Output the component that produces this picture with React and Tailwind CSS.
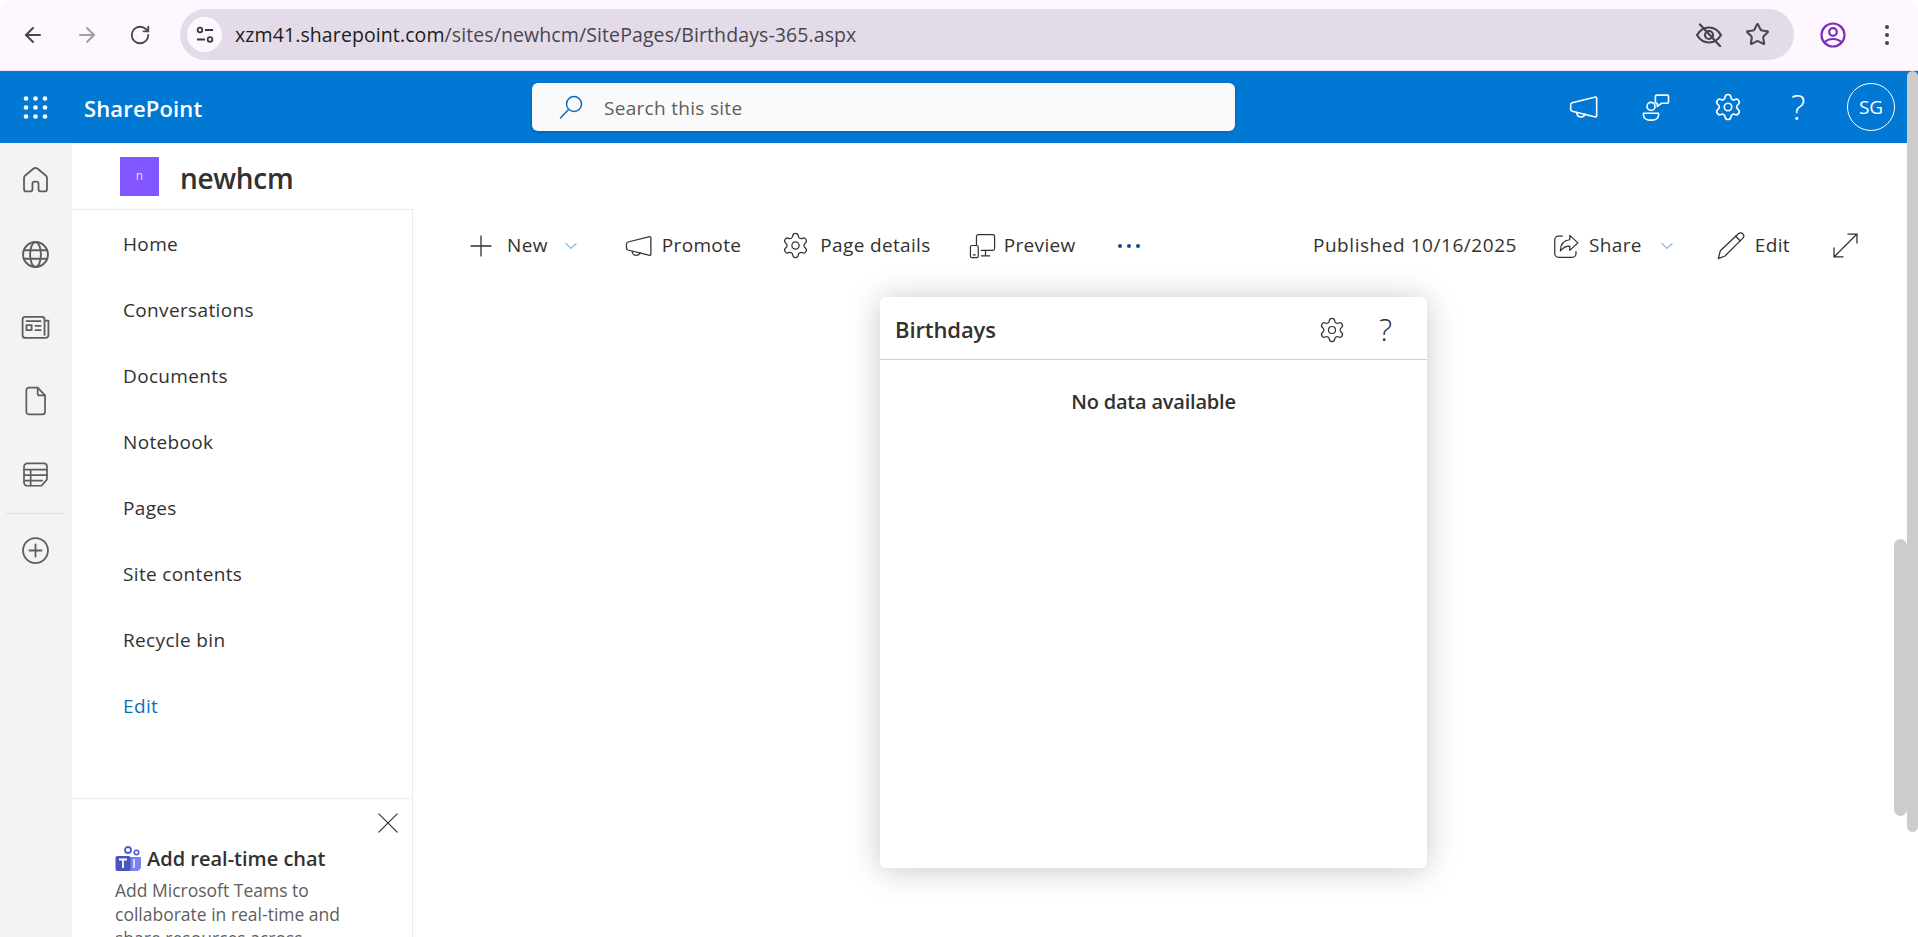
import React from "react";
import { ArrowLeft, ArrowRight, RotateCw, Star, Settings, ChevronDown } from "lucide-react";

const S = ({ size = 24, sw = 1.5, color = "currentColor", children, className = "" }) => (
  <svg width={size} height={size} viewBox="0 0 24 24" fill="none" stroke={color} strokeWidth={sw} strokeLinecap="round" strokeLinejoin="round" className={"shrink-0 " + className}>
    {children}
  </svg>
);

const Megaphone = (p) => (
  <S {...p}>
    <path d="M3.2 8.800 20.600 4.500c.5-.1.9.3.9.8v13.400c0 .5-.4.9-.9.8L3.200 15.200c-.7-.2-1.200-.8-1.200-1.500v-3.400c0-.7.5-1.300 1.200-1.500Z" />
    <path d="M6.500 16.200c.2 2 1.600 3.300 3.300 3.300 1.500 0 2.700-.9 3.100-2.200" />
  </S>
);
const Feedback = (p) => (
  <S {...p}>
    <circle cx="8" cy="11.500" r="3.200" />
    <path d="M2 17h12v1.500c0 2.300-2.500 4-6 4s-6-1.700-6-4V17Z" />
    <path d="M11.500 3.500c0-.6.4-1 1-1H21c.6 0 1 .4 1 1V8c0 .6-.4 1-1 1h-4.500L13 11.500V9h-.5c-.6 0-1-.4-1-1V3.500Z" />
  </S>
);
const Preview = (p) => (
  <S {...p}>
    <path d="M7 12V4.500C7 3.700 7.700 3 8.500 3h12c.8 0 1.500.7 1.500 1.500v10c0 .8-.7 1.500-1.500 1.500H11" />
    <path d="M14.500 16v4M11 20.500h7" />
    <rect x="2" y="12" width="6.500" height="10" rx="1.300" />
    <path d="M4.500 19.800h1.500" />
  </S>
);
const Share = (p) => (
  <S {...p}>
    <path d="M9 4H6a3 3 0 0 0-3 3v11a3 3 0 0 0 3 3h11a3 3 0 0 0 3-3v-1.500" />
    <path d="M15 3.500 21.500 9.500 15 15.500V12c-3.500 0-5.500 1-7.500 4 0-5 2.500-8.500 7.500-9V3.500Z" />
  </S>
);
const Pencil = (p) => (
  <S {...p}>
    <path d="M2.500 21.500 4 15.500 17.500 2.800c1-.9 2.500-.9 3.400.1.900 1 .8 2.500-.2 3.400L7.500 19.500l-5 2Z" />
    <path d="M15.500 4.700 19 8.200" />
  </S>
);
const Expand = (p) => (
  <S {...p}>
    <path d="M14 2.500h7.500V10M21.500 2.500l-19 19M2.500 14v7.500H10" />
  </S>
);
const Cross = (p) => (
  <S {...p}>
    <path d="M2 2 22 22M22 2 2 22" />
  </S>
);
const PlusThin = (p) => (
  <S {...p}>
    <path d="M12 2v20M2 12h20" />
  </S>
);

const Home = (p) => (
  <S {...p}>
    <path d="M10.200 3.100a2.800 2.800 0 0 1 3.600 0l6.700 5.600c.6.500 1 1.300 1 2.100v9.200c0 1-.8 1.800-1.800 1.800h-3.400c-1 0-1.800-.8-1.800-1.800v-4.500c0-1-.8-1.800-1.800-1.800h-1.400c-1 0-1.800.8-1.800 1.800V20c0 1-.8 1.800-1.800 1.800H4.300c-1 0-1.800-.8-1.800-1.800v-9.200c0-.8.400-1.600 1-2.100l6.700-5.600Z" />
  </S>
);
const Globe = (p) => (
  <S {...p}>
    <circle cx="12" cy="12" r="10.300" />
    <ellipse cx="12" cy="12" rx="4.500" ry="10.300" />
    <path d="M2.500 8.500h19M2.500 15.500h19" />
  </S>
);
const News = (p) => (
  <S {...p}>
    <path d="M19 18.500V6.500c0-1.200-.9-2-2-2H4c-1.100 0-2 .8-2 2v12c0 1.300 1 2.300 2.300 2.300h15.500c1.300 0 2.200-1 2.200-2.200V7.500h-3" />
    <rect x="5" y="11" width="4" height="3.800" />
    <path d="M5 7.800h11M12 11.500h4M12 14.800h4" />
  </S>
);
const Doc = (p) => (
  <S {...p}>
    <path d="M5.500 4c0-1.100.9-2 2-2H14l5.500 5.800V20c0 1.100-.9 2-2 2h-10c-1.100 0-2-.9-2-2V4Z" />
    <path d="M14 2v4.300c0 .8.700 1.500 1.500 1.500h4" />
  </S>
);
const Lists = (p) => (
  <S {...p}>
    <path d="M2.500 8V5.500c0-1.500 1.200-2.700 2.700-2.700h13.600c1.500 0 2.700 1.200 2.700 2.700V16l-4.500 5.300H5.200c-1.500 0-2.700-1.200-2.700-2.700V8Z" />
    <path d="M2.500 8h19M2.500 12.500h19M2.500 17h15M8 8v13" />
  </S>
);
const PlusCircle = (p) => (
  <S {...p}>
    <circle cx="12" cy="12" r="10.300" />
    <path d="M12 7v10M7 12h10" />
  </S>
);

const Waffle = () => (
  <svg width="25" height="23" viewBox="0 0 25 23" fill="#fff" className="shrink-0">
    {[3, 12.5, 22].map((x) =>
      [2.5, 11.5, 20.5].map((y) => <circle key={x + "-" + y} cx={x} cy={y} r="2.300" />)
    )}
  </svg>
);

const SearchIcon = () => (
  <svg width="24" height="24" viewBox="0 0 24 24" fill="none" stroke="#0f6cbd" strokeWidth="1.500" strokeLinecap="round" className="shrink-0">
    <circle cx="15" cy="9" r="7.500" />
    <path d="M9.500 14.500 1.500 23" />
  </svg>
);

const Teams = () => (
  <svg width="27" height="27" viewBox="0 0 27 27" className="shrink-0">
    <circle cx="13" cy="4" r="3" fill="none" stroke="#5059c9" strokeWidth="1.800" />
    <circle cx="21.500" cy="6.500" r="2.200" fill="none" stroke="#5059c9" strokeWidth="1.600" />
    <path d="M12 11h14v9.500a4.500 4.500 0 0 1-4.500 4.500H14a4 4 0 0 1-2-1V11Z" fill="#7b83eb" />
    <rect x="0.500" y="10" width="15" height="15" rx="2" fill="#4b53bc" />
    <path d="M4 13.500h8M8 13.500V22" stroke="#fff" strokeWidth="1.800" fill="none" />
    <path d="M19 13v9" stroke="#fff" strokeWidth="1.400" />
  </svg>
);

const NAV = ["Home", "Conversations", "Documents", "Notebook", "Pages", "Site contents", "Recycle bin"];

function CmdBtn({ icon, label, chevron, className = "", gap = "ml-[13px]", chevGap = "ml-[13px]" }) {
  return (
    <div className={"flex items-center " + className}>
      {icon}
      <span className={gap + " whitespace-nowrap"}>{label}</span>
      {chevron && <ChevronDown size={20} strokeWidth={1} className={chevGap + " text-[#0f6cbd]"} />}
    </div>
  );
}

export default function App() {
  return (
    <div className="relative flex h-[937px] w-full flex-col overflow-hidden bg-white font-['Open_Sans',sans-serif] text-[#323130]">
      {/* Browser bar */}
      <div className="flex h-[71px] shrink-0 items-center rounded-t-[10px] border-b border-[#eee0ea] bg-[#fef7ff] pb-px text-[#4a4453]">
        <ArrowLeft size={24} strokeWidth={2} className="ml-[21px]" />
        <ArrowRight size={24} strokeWidth={2} className="ml-[30px] text-[#a29ca8]" />
        <RotateCw size={22} strokeWidth={2} className="ml-[30px]" />
        <div className="ml-[29px] flex h-[51px] w-[1614px] items-center rounded-full bg-[#e3dce8] pl-[7px] pr-[24px]">
          <div className="flex size-[35px] items-center justify-center rounded-full bg-[#fef7ff]">
            <svg width="20" height="20" viewBox="0 0 20 20" fill="none" stroke="#3b3640" strokeWidth="1.800">
              <circle cx="5" cy="5" r="2.300" />
              <path d="M10 5h8M2 14.500h8" />
              <circle cx="15" cy="14.500" r="2.300" />
            </svg>
          </div>
          <span className="ml-[13px] whitespace-nowrap text-[19.5px] leading-none tracking-[0.1px] text-[#1d1b20]">
            xzm41.sharepoint.com<span className="text-[#49454f]">/sites/newhcm/SitePages/Birthdays-365.aspx</span>
          </span>
          <div className="ml-auto flex items-center gap-[22px]">
            <svg width="28" height="24" viewBox="0 0 28 24" fill="none" stroke="#47434c" strokeWidth="2.200" strokeLinecap="round">
              <path d="M2 12c3-5 7-7.500 12-7.500S23 7 26 12c-3 5-7 7.500-12 7.500S5 17 2 12Z" />
              <circle cx="14" cy="12" r="4" />
              <path d="M5 1.500 25 23" />
            </svg>
            <Star size={25} strokeWidth={2} />
          </div>
        </div>
        <svg width="26" height="26" viewBox="0 0 26 26" fill="none" stroke="#7b2fb5" strokeWidth="2.200" className="ml-[26px]">
          <circle cx="13" cy="13" r="11.500" />
          <circle cx="13" cy="10" r="3.800" />
          <path d="M4.500 20.500c2-2.500 5-3.500 8.500-3.500s6.500 1 8.500 3.500" />
        </svg>
        <svg width="6" height="22" viewBox="0 0 6 22" fill="#47434c" className="ml-[38px]">
          <circle cx="3" cy="3" r="2" />
          <circle cx="3" cy="11" r="2" />
          <circle cx="3" cy="19" r="2" />
        </svg>
      </div>

      {/* SharePoint suite bar */}
      <div className="relative flex h-[72px] shrink-0 items-center bg-[#0078d4] pr-[23px] text-white">
        <div className="ml-[23px]"><Waffle /></div>
        <span className="ml-[36px] mt-[2px] w-[124px] text-[22px] font-semibold tracking-[0.15px]">SharePoint</span>
        <div className="ml-[324px] flex h-[48px] w-[703px] items-center rounded-[6px] bg-[#fafafa] pl-[27px] shadow-[0_1px_3px_rgba(0,0,0,0.2)]">
          <SearchIcon />
          <span className="ml-[21px] mt-[2px] text-[19px] tracking-[0.3px] text-[#605e5c]">Search this site</span>
        </div>
        <div className="ml-auto flex items-center">
          <Megaphone size={32} sw={1.200} />
          <div className="ml-[41px]"><Feedback size={30} sw={1.300} /></div>
          <div className="ml-[42px]"><Settings size={30} strokeWidth={1.300} /></div>
          <span className="ml-[48px] w-[16px] text-[34px] font-light leading-none">?</span>
          <div className="ml-[40px] flex size-[48px] items-center justify-center rounded-full border border-white text-[19px]">SG</div>
        </div>
      </div>

      {/* Body */}
      <div className="flex min-h-0 flex-1">
        <div className="flex w-[72px] shrink-0 flex-col items-center bg-[#f3f3f3] pr-[2px] pt-[22px] text-[#605e5c]">
          <Home size={29} sw={1.500} />
          <div className="mt-[46px] flex"><Globe size={29} sw={1.600} /></div>
          <div className="mt-[42px] flex"><News size={31} sw={1.400} /></div>
          <div className="mt-[43px] flex"><Doc size={32} sw={1.300} /></div>
          <div className="mt-[43px] flex"><Lists size={29} sw={1.400} /></div>
          <div className="mt-[24px] h-px w-[59px] bg-[#e1dfdd]" />
          <div className="mt-[22px] flex"><PlusCircle size={29} sw={1.500} /></div>
        </div>

        <div className="flex min-w-0 flex-1 flex-col">
          <div className="flex h-[66px] shrink-0 items-center pl-[48px]">
            <div className="flex size-[39px] items-center justify-center bg-[#8155ff] text-[12px] text-[#e6dcff]">n</div>
            <span className="ml-[21px] mt-[3px] text-[28px] font-semibold leading-none tracking-[-0.3px]">newhcm</span>
          </div>

          <div className="flex min-h-0 flex-1">
            <div className="flex w-[341px] shrink-0 flex-col border-r border-t border-[#ececec]">
              <div className="flex h-[588px] shrink-0 flex-col pl-[51px] pt-[1px] text-[19px] tracking-[0.35px]">
                {NAV.map((n) => (
                  <div key={n} className="flex h-[66px] shrink-0 items-center">{n}</div>
                ))}
                <div className="flex h-[66px] shrink-0 items-center text-[#0f6cbd]">Edit</div>
              </div>
              <div className="relative flex-1 border-t border-[#ececec] pl-[43px] pt-[45px]">
                <div className="absolute right-[13px] top-[13px] flex"><Cross size={22} sw={1.300} /></div>
                <div className="flex items-center">
                  <Teams />
                  <span className="ml-[5px] whitespace-nowrap text-[20px] font-semibold">Add real-time chat</span>
                </div>
                <p className="mt-[4px] w-[250px] text-[17.5px] leading-[24px] text-[#605e5c]">
                  Add Microsoft Teams to collaborate in real-time and share resources across
                </p>
              </div>
            </div>

            <div className="min-w-0 flex-1">
              <div className="flex h-[72px] items-center pl-[56px] pr-[58px] pt-[1px] text-[19px] tracking-[0.35px]">
                <CmdBtn icon={<PlusThin size={24} sw={1.300} />} label="New" chevron gap="ml-[14px]" />
                <CmdBtn icon={<Megaphone size={30} sw={1} />} label="Promote" gap="ml-[8px]" className="ml-[43px]" />
                <CmdBtn icon={<Settings size={29} strokeWidth={1.050} />} label="Page details" gap="ml-[10px]" className="ml-[40px]" />
                <CmdBtn icon={<Preview size={29} sw={1} />} label="Preview" gap="ml-[7px]" className="ml-[37px]" />
                <svg width="24" height="6" viewBox="0 0 24 6" fill="#0f4c8a" className="ml-[41px]">
                  <circle cx="3" cy="3" r="2" />
                  <circle cx="12" cy="3" r="2" />
                  <circle cx="21" cy="3" r="2" />
                </svg>
                <span className="ml-auto whitespace-nowrap tracking-[0.55px]">Published 10/16/2025</span>
                <CmdBtn icon={<Share size={30} sw={1} />} label="Share" chevron gap="ml-[8px]" chevGap="ml-[15px]" className="ml-[34px]" />
                <CmdBtn icon={<Pencil size={32} sw={0.950} />} label="Edit" gap="ml-[8px]" className="ml-[38px]" />
                <div className="ml-[41px] flex"><Expand size={29} sw={1.050} /></div>
              </div>

              <div className="ml-[467px] mt-[16px] h-[571px] w-[547px] rounded-[6px] bg-white shadow-[0_2px_32px_rgba(0,0,0,0.22)]">
                <div className="flex h-[63px] items-center border-b border-[#cfcfcf] pl-[15px] pr-[35px] pt-[3px]">
                  <span className="text-[22px] font-semibold tracking-[-0.1px]">Birthdays</span>
                  <Settings size={28} strokeWidth={1.050} className="ml-auto" />
                  <span className="ml-[33px] text-[31px] font-light leading-none">?</span>
                </div>
                <div className="pt-[29px] text-center text-[20px] font-semibold leading-[26px] tracking-[-0.2px]">No data available</div>
              </div>
            </div>
          </div>
        </div>
      </div>

      {/* Overlay scrollbars */}
      <div className="absolute right-0 top-[71px] h-[761px] w-[11px] rounded-full bg-[#cccccc]" />
      <div className="absolute right-[11px] top-[539px] h-[277px] w-[13px] rounded-full bg-[#cccccc]" />
    </div>
  );
}
